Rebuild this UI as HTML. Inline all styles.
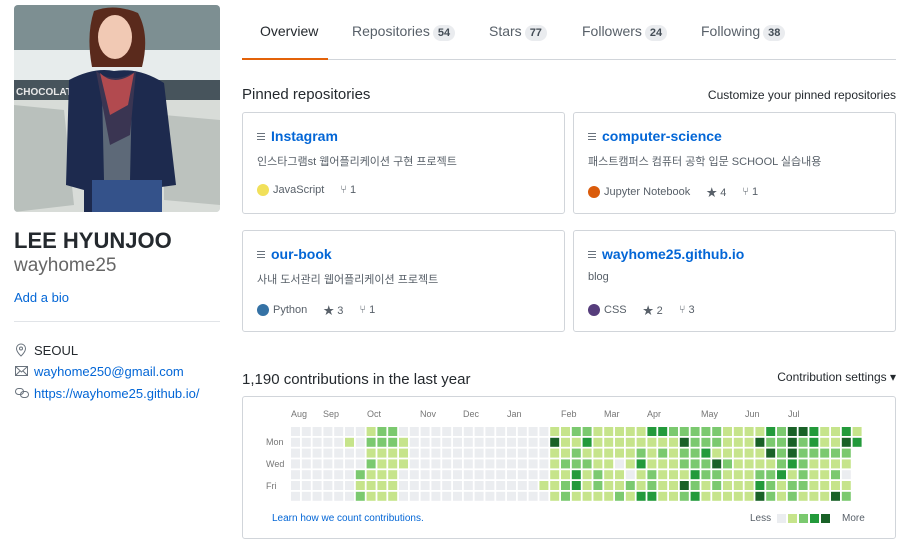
<!DOCTYPE html>
<html><head><meta charset="utf-8"><style>
*{box-sizing:border-box;margin:0;padding:0}
body{width:916px;height:555px;background:#fff;font-family:"Liberation Sans","Noto Sans CJK KR",sans-serif;color:#24292e;position:relative;overflow:hidden;font-size:12px}
.a{position:absolute;white-space:nowrap}
.blue{color:#0366d6}
.tab{position:absolute;top:23px;font-size:14px;color:#586069}
.cnt{display:inline-block;background:#eaecef;border-radius:10px;font-size:11px;font-weight:bold;color:#444d56;padding:2px 5px;margin-left:3px;line-height:12px}
.card{position:absolute;border:1px solid #d1d5da;border-radius:3px;width:323px;height:102px}
.card .t{position:absolute;left:28px;top:15px;font-size:14px;font-weight:bold;color:#0366d6}
.card .ic{position:absolute;left:14px;top:20px;width:8px;height:7px;border-top:1px solid #6a737d;border-bottom:1px solid #6a737d}
.card .ic:after{content:"";position:absolute;left:0;top:2px;width:8px;height:1px;background:#6a737d}
.card .d{position:absolute;left:14px;top:40px;font-size:11px;color:#586069}
.card .m{position:absolute;left:14px;top:71px;font-size:11px;color:#586069;display:flex;align-items:center}
.dot{display:inline-block;width:12px;height:12px;border-radius:50%;margin-right:4px}
.m span.s{margin-left:16px}
</style></head><body>
<svg class="a" style="left:14px;top:5px" width="206" height="207" viewBox="0 0 206 207">
<defs><clipPath id="c"><rect width="206" height="207" rx="4"/></clipPath></defs>
<g clip-path="url(#c)">
<rect width="206" height="207" fill="#c9d3d6"/>
<rect y="0" width="206" height="45" fill="#7d8f92"/>
<rect y="45" width="206" height="30" fill="#e7ecec"/>
<rect y="75" width="206" height="20" fill="#47545c"/>
<text x="2" y="90" font-size="10" font-weight="bold" fill="#e8e8e8" font-family="Liberation Sans">CHOCOLATE</text>
<rect y="95" width="206" height="112" fill="#d8dcd8"/>
<rect x="150" y="125" width="56" height="20" fill="#e8e08a"/>
<path d="M0 100 L50 105 L60 200 L0 207Z" fill="#b9c0bc"/>
<path d="M150 110 L206 115 L206 200 L150 195Z" fill="#bcc2be"/>
<path d="M80 6 Q100 -2 124 8 Q136 30 128 62 L78 62 Q72 30 80 6Z" fill="#5a2a1c"/>
<ellipse cx="101" cy="32" rx="17" ry="22" fill="#f1c9b4"/>
<path d="M55 75 Q80 62 100 66 Q125 62 150 78 L162 180 L140 183 L140 207 L70 207 L70 185 L52 180Z" fill="#1d2a4e"/>
<path d="M88 85 L118 85 L116 175 L90 175Z" fill="#5d6978"/>
<path d="M82 66 Q100 80 122 66 L116 130 L96 140 Z" fill="#3a3552"/>
<path d="M86 68 Q100 82 120 68 L114 100 L96 110Z" fill="#b24a4f"/>
<rect x="78" y="175" width="70" height="32" fill="#34528a"/>
</g></svg>

<div class="a" style="left:14px;top:228px;font-size:22px;font-weight:bold;color:#24292e">LEE HYUNJOO</div>
<div class="a" style="left:14px;top:255px;font-size:19px;color:#666;font-weight:300">wayhome25</div>
<div class="a blue" style="left:14px;top:290px;font-size:13px">Add a bio</div>
<div class="a" style="left:14px;top:321px;width:206px;height:1px;background:#e1e4e8"></div>
<svg class="a" style="left:15px;top:343px" width="12" height="14" viewBox="0 0 12 14"><path d="M6 1a4.5 4.5 0 0 0-4.5 4.5C1.5 9 6 13 6 13s4.5-4 4.5-7.5A4.5 4.5 0 0 0 6 1z" fill="none" stroke="#6a737d"/><circle cx="6" cy="5.5" r="1.5" fill="none" stroke="#6a737d"/></svg>
<div class="a" style="left:34px;top:343px;font-size:13px">SEOUL</div>
<svg class="a" style="left:15px;top:366px" width="13" height="10"><rect x=".5" y=".5" width="12" height="9" fill="none" stroke="#6a737d"/><path d="M.5 .5 6.5 6 12.5 .5M.5 9.5 5 5M12.5 9.5 8 5" fill="none" stroke="#6a737d"/></svg>
<div class="a blue" style="left:34px;top:364px;font-size:13px">wayhome250@gmail.com</div>
<svg class="a" style="left:15px;top:388px" width="14" height="10"><rect x=".5" y=".5" width="8" height="6" rx="3" fill="none" stroke="#6a737d"/><rect x="5.5" y="3.5" width="8" height="6" rx="3" fill="none" stroke="#6a737d"/></svg>
<div class="a blue" style="left:34px;top:386px;font-size:13px">https://wayhome25.github.io/</div>

<div class="tab" style="left:260px;color:#24292e">Overview</div>
<div class="tab" style="left:352px">Repositories<span class="cnt">54</span></div>
<div class="tab" style="left:489px">Stars<span class="cnt">77</span></div>
<div class="tab" style="left:582px">Followers<span class="cnt">24</span></div>
<div class="tab" style="left:701px">Following<span class="cnt">38</span></div>
<div class="a" style="left:242px;top:59px;width:654px;height:1px;background:#d1d5da"></div>
<div class="a" style="left:242px;top:58px;width:86px;height:2px;background:#e36209"></div>

<div class="a" style="left:242px;top:86px;font-size:15px">Pinned repositories</div>
<div class="a" style="right:20px;top:88px;font-size:12px;color:#24292e">Customize your pinned repositories</div>

<div class="card" style="left:242px;top:112px"><div class="ic"></div><div class="t">Instagram</div><div class="d">인스타그램st 웹어플리케이션 구현 프로젝트</div><div class="m"><i class="dot" style="background:#f1e05a"></i>JavaScript<span class="s">⑂ 1</span></div></div>
<div class="card" style="left:573px;top:112px"><div class="ic"></div><div class="t">computer-science</div><div class="d">패스트캠퍼스 컴퓨터 공학 입문 SCHOOL 실습내용</div><div class="m"><i class="dot" style="background:#da5b0b"></i>Jupyter Notebook<span class="s">★ 4</span><span class="s">⑂ 1</span></div></div>
<div class="card" style="left:242px;top:230px"><div class="ic"></div><div class="t">our-book</div><div class="d">사내 도서관리 웹어플리케이션 프로젝트</div><div class="m"><i class="dot" style="background:#3572a5"></i>Python<span class="s">★ 3</span><span class="s">⑂ 1</span></div></div>
<div class="card" style="left:573px;top:230px"><div class="ic"></div><div class="t">wayhome25.github.io</div><div class="d">blog</div><div class="m"><i class="dot" style="background:#563d7c"></i>CSS<span class="s">★ 2</span><span class="s">⑂ 3</span></div></div>

<div class="a" style="left:242px;top:371px;font-size:15px">1,190 contributions in the last year</div>
<div class="a" style="right:20px;top:370px;font-size:12px">Contribution settings ▾</div>
<div class="a" style="left:242px;top:396px;width:654px;height:143px;border:1px solid #d1d5da;border-radius:3px"></div>
<div class="a" style="left:291px;top:409px;font-size:9px;color:#767676">Aug</div>
<div class="a" style="left:323px;top:409px;font-size:9px;color:#767676">Sep</div>
<div class="a" style="left:367px;top:409px;font-size:9px;color:#767676">Oct</div>
<div class="a" style="left:420px;top:409px;font-size:9px;color:#767676">Nov</div>
<div class="a" style="left:463px;top:409px;font-size:9px;color:#767676">Dec</div>
<div class="a" style="left:507px;top:409px;font-size:9px;color:#767676">Jan</div>
<div class="a" style="left:561px;top:409px;font-size:9px;color:#767676">Feb</div>
<div class="a" style="left:604px;top:409px;font-size:9px;color:#767676">Mar</div>
<div class="a" style="left:647px;top:409px;font-size:9px;color:#767676">Apr</div>
<div class="a" style="left:701px;top:409px;font-size:9px;color:#767676">May</div>
<div class="a" style="left:745px;top:409px;font-size:9px;color:#767676">Jun</div>
<div class="a" style="left:788px;top:409px;font-size:9px;color:#767676">Jul</div>
<div class="a" style="left:266px;top:437px;font-size:9px;color:#767676">Mon</div>
<div class="a" style="left:266px;top:459px;font-size:9px;color:#767676">Wed</div>
<div class="a" style="left:266px;top:481px;font-size:9px;color:#767676">Fri</div>
<svg id="g" class="a" style="left:291px;top:427px" width="580" height="76"></svg>
<div class="a blue" style="left:272px;top:513px;font-size:10px">Learn how we count contributions.</div>
<div class="a" style="left:750px;top:513px;font-size:10px;color:#586069">Less</div>
<svg class="a" style="left:777px;top:514px" width="60" height="10"><rect x="0" width="9" height="9" fill="#ebedf0"/><rect x="11" width="9" height="9" fill="#c6e48b"/><rect x="22" width="9" height="9" fill="#7bc96f"/><rect x="33" width="9" height="9" fill="#239a3b"/><rect x="44" width="9" height="9" fill="#196127"/></svg>
<div class="a" style="left:842px;top:513px;font-size:10px;color:#586069">More</div>
<script>
var cols=["0000000","0000000","0000000","0000000","0000000","0100000","0000212","1212111","2211111","2211111","0111000",
"0000000","0000000","0000000","0000000","0000000","0000000","0000000","0000000","0000000","0000000","0000000","0000000","0000010",
"1411111","1112122","2122331","2312111","1111221","1111111","1110112","1111021","1123113","3111223","3121111","2111111",
"2422142","2222323","2232211","2214221","1112111","1111111","1111111","1411234","3241222","2222311","4443122","4222221",
"3321111","1121111","1121214","3421012","13"];
var c=["#ebedf0","#c6e48b","#7bc96f","#239a3b","#196127"],s="";
cols.forEach(function(col,i){for(var j=0;j<col.length;j++){s+='<rect x="'+(i*10.8).toFixed(1)+'" y="'+(j*10.8).toFixed(1)+'" width="9" height="9" fill="'+c[+col[j]]+'"/>';}});
document.getElementById("g").innerHTML=s;
</script>
</body></html>
